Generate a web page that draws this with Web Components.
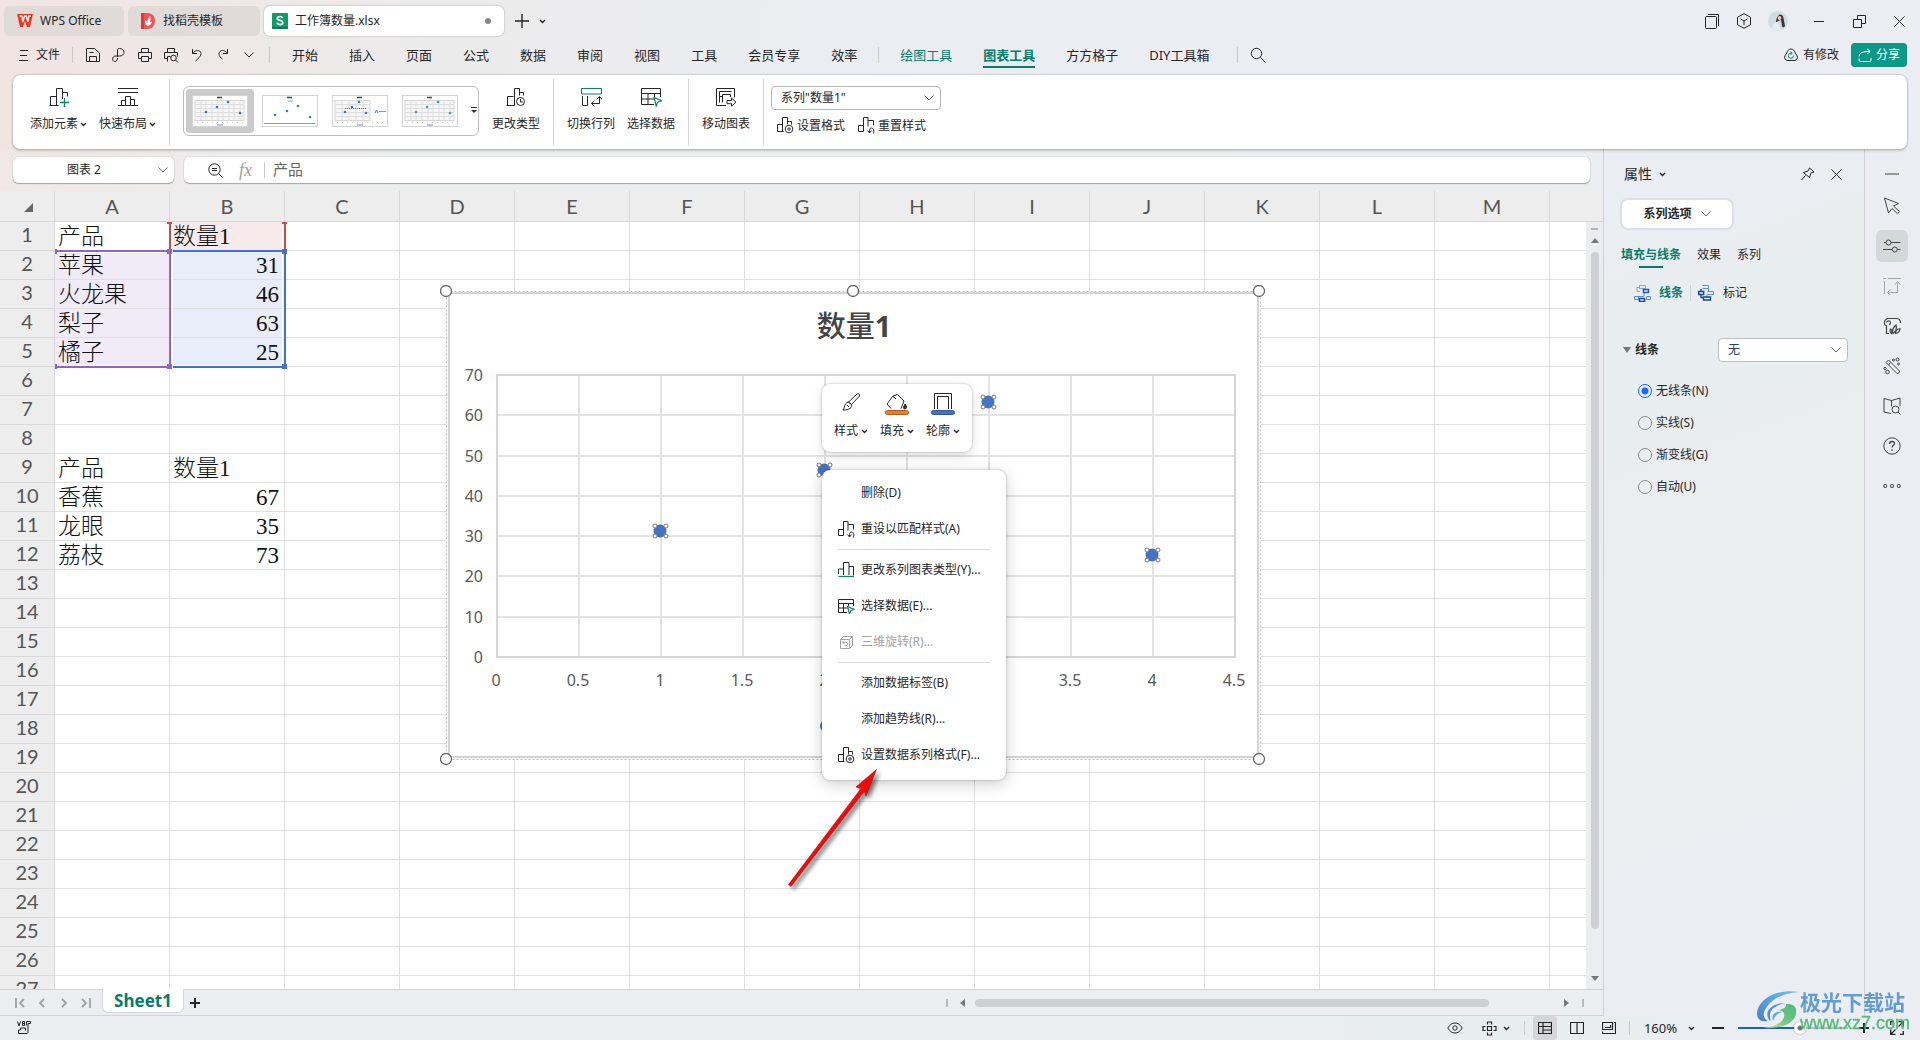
<!DOCTYPE html>
<html lang="zh-CN">
<head>
<meta charset="utf-8">
<title>工作簿数量.xlsx</title>
<style>
html,body{margin:0;height:100%}
body{font:12px/16px "Noto Sans","Noto Sans CJK SC",sans-serif;color:#262626;overflow:hidden}
</style>
</head>
<body>
<wps-app></wps-app>
<script>
const define = (name, css, html, init) => customElements.define(name, class extends HTMLElement {
  constructor(){
    super();
    const root = this.attachShadow({mode:'open'});
    const t = document.createElement('template');
    t.innerHTML = `<style>*{box-sizing:border-box}button,select,input{font:inherit;color:inherit;background:none;border:0;margin:0;padding:0;outline:0}button{display:flex;align-items:center;justify-content:center;white-space:nowrap}${css}</style>${html}`;
    root.append(t.content.cloneNode(true));
    if(init) this._init = init;
  }
  connectedCallback(){ if(this._init) this._init(this.shadowRoot, this); }
});

const G = '#0a8566';
const ICONS = {
  wps:[16,16,'<path d="M0 1h16l-3 13h-3l-2-6-2 6H3z" fill="#f5331f"/><path d="M2.6 3h2.2l1 6 1.7-6h1.8l1.6 6 1-6h1.8" fill="none" stroke="#fff" stroke-width="1.3"/>'],
  docer:[16,16,'<path d="M0 0h6c6 0 8 4 8 8s-2 8-8 8H0z" fill="#f05458"/><path d="M0 0h3v16H0z" fill="#d93a40"/><path d="M6.500 13C3.500 11 4 8 4.500 7c1 1 2 2 2 3 0-3 .5-5 2.500-7 1 3 .5 5-.5 7 1-1 2-1.300 2.500-1.500 0 2-1.500 4-4.500 4.500z" fill="#fff"/>'],
  sheet:[16,16,'<rect width="16" height="16" rx="1" fill="#109a66"/><path d="M0 14h16v1a1 1 0 0 1-1 1H1a1 1 0 0 1-1-1z" fill="#0a7d4f"/><path d="M10.700 5.200C10.200 4 9.300 3.500 8 3.500c-1.600 0-2.700.8-2.700 2 0 2.600 5.500 1.200 5.500 4 0 1.300-1.100 2.100-2.800 2.100-1.500 0-2.500-.6-3-1.900" fill="none" stroke="#fff" stroke-width="1.700"/>'],
  plus:[14,14,'<path d="M7 0v14M0 7h14" stroke-width="1.400"/>'],
  plusb:[10,10,'<path d="M5 0v10M0 5h10" stroke-width="2"/>'],
  minusb:[12,10,'<path d="M0 5h12" stroke-width="2"/>'],
  caret:[7,5,'<path d="M1 1l2.500 2.500L6 1" stroke-width="1.400"/>'],
  chev:[10,6,'<path d="M.5.5L5 5 9.500.5"/>'],
  menu:[10,12,'<path d="M1 1.500h8M1 6.500h7M0 11.500h9"/>'],
  save:[16,16,'<path d="M1.500 1.500h8l5 4.500v8.500h-13zM4.500 14.500v-5h7v5M4.500 5.500h4"/>'],
  pdf:[16,16,'<path d="M6.500 10V3C6.500 2 7 1.500 8.500 1.500c6 0 6 7.500 0 7.500H4C1 9.500 1 14.500 3.500 14.500c2.500 0 3-1.500 3-3.500"/>'],
  print:[16,16,'<path d="M4.500 5V1.500h7V5M4.500 11.500h-3v-6h13v6h-3M4.500 9.500h7v5h-7z"/>'],
  preview:[16,16,'<path d="M4.500 5V1.500h7V5M4 11.500H1.500v-6h13v4M4.500 14.500v-5h3"/><circle cx="10.500" cy="11" r="2.800"/><path d="M12.500 13l2.500 2.500"/>'],
  undo:[14,14,'<path d="M2.500 1v4.500h4.500M2.500 5.500C5 1.500 10.500 1.500 11 5.500c0 3-3 5-5.500 7.500"/>'],
  redo:[14,14,'<path d="M11.500 1v4.500H7M11.500 5.500C9 1.500 3.500 1.500 3 5.500c0 3 2 4.500 3.500 5.500"/>'],
  search:[16,16,'<circle cx="6.500" cy="6.500" r="5.200"/><path d="M10.500 10.500l5 5"/>'],
  pages:[15,15,'<rect x=".5" y="2.500" width="11" height="12" rx="1"/><path d="M3 .5h10.500V12"/>'],
  cube:[16,16,'<path d="M8 .7l6.500 3.600v7.400L8 15.300 1.500 11.700V4.300zM4.500 5.800L8 8l3.500-2.200M8 8v4"/>'],
  avatar:[20,20,'<circle cx="10" cy="10" r="10" fill="#cfdde3"/><path d="M10 5c2-2.500 5-1.500 5.500 2l1.500 8c-1 2-2.500 1.500-3 0l-1-6-3 1-2 2c0-3 .5-5 2-7z" fill="#3c3436"/><circle cx="11.500" cy="7" r="1.900" fill="#edc8b8"/><path d="M4 18c0-5 3-7 6-7l3 8c-3 1.200-6 1-9-1z" fill="#e3ecf0"/>'],
  min:[10,10,'<path d="M0 5.500h10"/>'],
  restore:[13,13,'<path d="M.5 4.500h8v8h-8zM4.500 4V.5h8v8H9"/>'],
  close:[11,11,'<path d="M.5.5l10 10M10.500.5l-10 10"/>'],
  cloud:[16,14,'<path d="M4 12.500a3.500 3.500 0 0 1-.5-6.500C4 2.500 6 1 8 1s4 1.500 4.500 5A3.500 3.500 0 0 1 12 12.500z"/><path d="M10.500 7.500a2.600 2.600 0 1 1-2-2.300M7.500 3.500l1.800 1.700-1.800 1.600" stroke="#0a8566"/>'],
  share:[14,14,'<path d="M1 8.500C1.500 4.500 5 3.500 11.500 3.500M9 .8l3.200 2.700L9 6.200M1 10.500v1.500q0 1.500 1.500 1.500h9q1.500 0 1.500-1.500v-2"/>'],
  addel:[20,20,`<path d="M13.500 12V1.500h-6v17M1.500 18.500v-9h6M.5 18.500h9M13.500 5.500h5v4"/><path d="M15.500 11v9M11 15.500h9" stroke="${G}" stroke-width="1.300"/>`],
  layout:[20,20,'<path d="M0 1.500h20M0 5.500h20M0 18.500h20M3.500 18.500v-5h4v5M7.500 14V9.500h5v9M12.500 12.500h4v6"/>'],
  ctype:[20,20,'<path d="M.5 18.500h8V1.500h5v7M1.500 18.500v-9h6M13.500 5.500h4v3"/><circle cx="14.500" cy="14.500" r="4"/><path d="M14.500 12v3h2.500"/>'],
  swap:[21,20,`<path d="M.5 1.500h20v5.500H.5z" stroke="${G}"/><path d="M1.500 9v9.500h5V9M18.500 10v6.500h-8M13.500 13.500l-3 3 3 3M15.500 12.500l3-3 2.500 3"/>`],
  seldata:[21,20,`<path d="M13 17.500H.5v-16h19V10M.5 6.500h19M.5 12h13M7 6.500v11M13.500 6.500V10"/><path d="M13 10.500l7.500 3.200-3.500 1.300-1.800 4z" stroke="${G}" stroke-width="1.200"/>`],
  move:[21,20,'<path d="M10 18.500H.5v-17h18v9M3.500 4.500h12M3.500 4.500v11M6.500 15.500v-8h8v2.500M3.500 9.500h3M11 13.500h4.500v-2.500l4.500 4.200-4.500 4v-2.500H11z"/>'],
  setfmt:[17,17,'<path d="M6.500 14.500h-6v-7h5v7M5.500 8V.5h5v7M10.500 4.500h4v3"/><circle cx="12" cy="12" r="3.800"/><circle cx="12" cy="12" r="1.200"/>'],
  reset:[17,17,'<path d="M5.500 14.500h-5v-6h5v6M5.500 9V.5h4.500v9M10 3.500h5.500v5M15.500 16.500c.8-3.500 0-5.500-2-5.500s-2 1.500-2 4.500M9.500 13.500l2 2.500 2-2.500"/>'],
  bars:[17,16,`<path d="M.5 12v-5h5v6M5.500 7V.500h5.500v12.500M11 4.500h4.500v9"/><path d="M.5 14.500h15.500" stroke="${G}" stroke-width="1.300"/>`],
  seldatas:[17,16,`<path d="M9 14.500H.5v-13h15V8M.5 5.500h15M.5 10h9M5.500 5.500v9M10.500 5.500V8"/><path d="M9.500 8.500l6.500 2.800-3 1.200-1.500 3.500z" stroke="${G}" stroke-width="1.200"/>`],
  cube3:[16,16,'<path d="M2.500 5.500h9v9h-9zM2.500 5.500l3-3h9l-3 3M14.500 2.500v9l-3 3M5 9c1.500-1.500 4-1 4.500.5.500 1.500-1.500 2.500-3 2M5 7v2h2"/>'],
  brush:[20,18,'<path d="M7.500 9L16 1c2-1 3 .5 2.500 2L10.500 11.500z"/><path d="M7.500 9l3 2.500c1 3-2 5.500-8.500 5.500 2-2 1-6 4-7.500zM6 12l2 2"/>'],
  bucket:[24,22,'<path d="M6 15.500L2 11l6-8 4.500-1.500L19 8l-3 7.500M8 3.500l3 2.500"/><path d="M20 11c1.500 2 2 3 1 4.500-1 .8-2 .5-2.500-.5 0-1.500 1-2.500 1.500-4z" fill="#333"/><rect x=".5" y="17.500" width="23" height="4" rx="2" fill="#ed7d31" stroke="#b95a17"/>'],
  outline:[24,22,'<path d="M3.500 16V.5h17V16M6.500 16V3.500h11V16"/><rect x=".5" y="17.500" width="23" height="4" rx="2" fill="#4472c4" stroke="#2f55a0"/>'],
  zoomout:[15,15,'<circle cx="6.500" cy="6.500" r="5.700"/><path d="M4 5.500h5M4 7.500h5M11 11l3.500 3.500"/>'],
  pin:[14,14,'<path d="M8.500 1l4.500 4-3 1-1.500 4.500L2.500 5.500 7 4zM4.500 8.500L.5 13"/>'],
  linei:[17,17,'<path d="M5.500.5h6v3h-6zM3 6.500v-4h2.500M3 6.500h3" stroke="#7fa6f0"/><path d="M9.500 4.500h5v3h-5z" stroke="#2554a8" stroke-width="1.500"/><path d="M10 8v3M4 11.500h6M.5 11.500h4v3h-4zM12.500 11.500h4v3h-4z" stroke="#5b8ae8"/><path d="M5.500 13.500h5v3h-5z" stroke="#174a8c" stroke-width="1.500"/>'],
  marki:[17,16,'<path d="M4.500.5h6v3h-6M10.500 2v4M9.500 6.500h6v3h-6M9 9v3" stroke="#5b8ae8"/><path d="M.7 6.500h5v3h-5zM3 9.500v3h3M3 6V4M5.500 12h7v3h-7z" stroke="#174a8c" stroke-width="1.400"/>'],
  cursor:[18,18,'<path d="M1.500 1l14 5.500-5 2.500 6 5.500-2 2.200L9 11.500 5.500 16z"/>'],
  sliders:[18,16,'<path d="M1 4.500h2M8 4.500h9.500M0 11.500h9M14.500 11.500h3"/><circle cx="5.500" cy="4.500" r="2.500"/><circle cx="11.800" cy="11.500" r="2.500"/>'],
  crop:[18,18,'<path d="M0 1.500h3M5 1.500h13M1.500 4v13M4.500 15.500h10v-10M7.500 12.500l-3 3 3 2.500M11.500 8l3-3.500 3 3.500"/>'],
  eleph:[18,18,'<path d="M6 16.500H3.500V9C.5 8 .5 3 4.500 1.500h9c2.500 0 4 2 4 4.500M3.500 5.500c.5-1.500 2-2 3-1.500 1.500.5 1 3-.5 4M7.500 12c1.500.5 1.500 2.500 1 4.500-1.500-1-1.800-2.800-1-4.500zM10 16.500c-1-3 .5-6.500 3-8.500.8 3 0 6.500-3 8.500zM12.500 16.500c0-3 2-4.500 4.500-5-.2 3-1.500 4.500-4.500 5z" stroke-width="1.200"/>'],
  wand:[18,18,'<path d="M3 5.500l2.500-2.500 11 11c0 2-1 2.500-2.500 2.500zM5.500 8l2-2.500"/><circle cx="10.500" cy="3" r="1"/><circle cx="14.500" cy="2.500" r="1.500"/><circle cx="15.500" cy="7" r="1"/><circle cx="2" cy="11.500" r="1.200"/><circle cx="4.500" cy="15" r="1.800"/>'],
  book:[18,18,'<path d="M8.500 3.500v6M8.500 3.500L1 1.500V15l7 1.500M8.500 3.500L17 1v8"/><circle cx="12.500" cy="12.500" r="3.500"/><path d="M15 15l2.500 2.500"/>'],
  help:[18,18,'<circle cx="9" cy="9" r="8.200"/><path d="M6.500 7c0-3.500 5-3 5-.5 0 1.500-2.500 2-2.500 4M9 12.200v1.500" stroke-width="1.300"/>'],
  dots:[18,6,'<circle cx="2.200" cy="3" r="1.600"/><circle cx="9" cy="3" r="1.600"/><circle cx="15.800" cy="3" r="1.600"/>'],
  first:[10,12,'<path d="M1 1v10M9 2L5 6l4 4" stroke-width="1.800"/>'],
  prev:[10,12,'<path d="M7 2L3 6l4 4" stroke-width="1.800"/>'],
  next:[10,12,'<path d="M3 2l4 4-4 4" stroke-width="1.800"/>'],
  last:[10,12,'<path d="M9 1v10M1 2l4 4-4 4" stroke-width="1.800"/>'],
  vb:[16,14,'<path d="M.5.500L2 5 3.500.500M5.500.500v4h2v-4zM5.500 2.500h2M9.500 4.500V.500h4v2h-2.500V12M1.500 12.500v-3.500h2V7h5v2.500M1.500 12.500h9"/>'],
  eye:[16,12,'<path d="M.8 6C3 2.500 5 1 8 1s5 1.500 7.200 5C13 9.500 11 11 8 11S3 9.500.8 6z"/><circle cx="8" cy="6" r="2.200"/>'],
  cross:[15,15,'<path d="M5.500 3.500V1h4v2.500M5.500 11.500V14h4v-2.500M3.500 5.500H1v4h2.500M11.500 5.500H14v4h-2.500M5.500 5.500h4v4h-4z" stroke-width="1.200"/>'],
  vnorm:[14,12,'<path d="M.5.500h13v11H.5zM.5 4.500h13M5 .5v11M5 8h8.500" stroke-width="1.200"/>'],
  vpage:[14,12,'<path d="M.5.500h13v11H.5zM7 .5v11" stroke-width="1.200"/>'],
  vbreak:[14,12,'<path d="M.5.500h10v7H.5zM3 5.500h5.500V3M.5 9.500v2h13V.5h-1.500" stroke-width="1.200"/>'],
  full:[14,14,'<path d="M8.500.7h4.800v4.800M5.500 13.300H.7V8.500M13 1L8.500 5.500M1 13l4.500-4.500M.7 4V.7H4M13.300 10v3.300H10" stroke-width="1.300"/>'],
};
const icon = n => { const [w,h,p] = ICONS[n]; return `<svg width="${w}" height="${h}" viewBox="0 0 ${w} ${h}" fill="none" stroke="currentColor" stroke-width="1" aria-hidden="true">${p}</svg>`; };
define('ui-icon', ':host{display:inline-flex;flex:none}svg{display:block}', '', (r,el)=>{ r.innerHTML += icon(el.getAttribute('name'));
  // filled logos carry no outline
  if(['wps','docer','sheet','avatar'].includes(el.getAttribute('name'))) r.querySelector('svg').setAttribute('stroke','none'); });
const I = n => `<ui-icon name="${n}"></ui-icon>`;

define('title-bar', `
:host{display:flex;align-items:stretch;height:36px;padding:6px 14px 0 4px;gap:4px}
.tab{border-radius:6px;background:#e0dad9;padding:0 13px 1px;justify-content:flex-start;gap:7px}
.t1{width:120px}.t2{width:132px;gap:6px}
.t3{width:240px;background:#fff;box-shadow:0 0 2px #0005;padding:0 13px 1px 8px}
.dot{width:6px;height:6px;border-radius:3px;background:#888;margin-left:auto}
.new{margin-left:7px;gap:10px;display:flex;align-items:center}
.win{margin-left:auto;display:flex;align-items:center}
.win button{height:28px}
`, `
<button class="tab t1">${I('wps')}WPS Office</button>
<button class="tab t2">${I('docer')}找稻壳模板</button>
<button class="tab t3">${I('sheet')}工作簿数量.xlsx<span class="dot"></span></button>
<div class="new"><button aria-label="新建">${I('plus')}</button><button aria-label="更多">${I('caret')}</button></div>
<div class="win"><button style="width:32px" aria-label="窗口">${I('pages')}</button><button style="width:32px" aria-label="应用">${I('cube')}</button><button style="width:36px" aria-label="账户">${I('avatar')}</button><button style="width:46px" aria-label="最小化">${I('min')}</button><button style="width:34px" aria-label="还原">${I('restore')}</button><button style="width:46px;margin-right:-16px" aria-label="关闭">${I('close')}</button></div>`);

define('menu-bar', `
:host{display:flex;align-items:center;height:39px;padding:0 13px 2px 19px}
.file{gap:7px}i{width:1px;height:16px;background:#c9c9c9}
.q{display:flex;margin:0 0 0 7px}.q button{width:26px;height:24px}
nav{display:flex;align-items:center;gap:31px;margin-left:22px;font-size:13px;line-height:24px}
nav button{height:25px;position:relative}
nav i{margin:0 -10px}
.g{color:#047d6c}.on{font-weight:700}.on::after{content:"";position:absolute;left:0;right:0;bottom:-1px;height:2px;background:#047d6c}
.r{margin-left:auto;display:flex;gap:12px;align-items:center}.r button{gap:4px;height:24px}
.share{background:#089a86;color:#fff;border-radius:4px;width:56px}
`, `
<button class="file">${I('menu')}文件</button><i style="margin-left:12px"></i>
<div class="q">${['save','pdf','print','preview','undo','redo','chev'].map(n=>`<button aria-label="${n}">${I(n)}</button>`).join('')}</div><i style="margin-left:7px"></i>
<nav>${['开始','插入','页面','公式','数据','审阅','视图','工具','会员专享','效率'].map(t=>`<button>${t}</button>`).join('')}<i></i>
<button class="g">绘图工具</button><button class="g on">图表工具</button><button>方方格子</button><button>DIY工具箱</button></nav>
<i style="margin:0 12px 0 28px"></i><button aria-label="搜索">${I('search')}</button>
<div class="r"><button>${I('cloud')}有修改</button><button class="share">${I('share')}分享</button></div>`);

const thumb = (v) => {
  const c = v==3?'#3f9bc8':'#4472c4';
  const grid = v==1?'<path d="M2 28.500h51" stroke="#999"/>':`<rect x="3" y="5.500" width="${v==2?35:49}" height="20" fill="#f6f6f6" stroke="#d6d6d6"/><path d="M3 9.500h${v==2?35:49}M3 13.500h${v==2?35:49}M3 17.500h${v==2?35:49}M3 21.500h${v==2?35:49}M${v==2?'10 5v20M17 5v20M24 5v20M31 5v20':'9 5v20M14 5v20M20 5v20M26 5v20M31 5v20M37 5v20M42 5v20M48 5v20'}" stroke="#dedede"/>`;
  const pts = [[[14,17],[25,12],[36,7],[48,18]],[[13,20],[25,16],[36,11],[48,22]],[[13,17],[20,12],[27,7],[34,18]],[[14,17],[25,12],[36,7],[48,18]]][v];
  return `<svg width="56" height="32" viewBox="0 0 56 32" fill="none"><rect x=".5" y=".5" width="55" height="31" fill="#fff" stroke="#d4d4d4"/>${grid}<path d="M25 2.500h5" stroke="#444" stroke-width="1.500"/>${v==1?'<path d="M26 6h5" stroke="#7d9bd6"/>':'<path d="M5 27.500h46" stroke="#c9bfb2" stroke-dasharray="1 4"/><path d="M25 30h6" stroke="#6f8fc9"/>'}${v==2?'<path d="M13 13.500h21" stroke="#4472c4" stroke-dasharray="1 1"/><path d="M43 18l1.500-3 1.500 3" stroke="#4472c4"/><path d="M47 16.500h7" stroke="#999"/>':''}${pts.map(p=>`<circle cx="${p[0]}" cy="${p[1]}" r="1.300" fill="${c}"/>`).join('')}</svg>`;
};
define('ribbon-bar', `
:host{display:flex;align-items:center;gap:13px;height:74px;margin:0 13px;padding:0 17px;background:#fff;border-radius:7px;box-shadow:0 0 2px #0006,0 2px 3px #0002;position:relative;z-index:2}
i{width:1px;height:66px;background:#d4d4d4}
.b{flex-direction:column;gap:9px;height:54px;min-width:48px;margin-bottom:5px}.b span{display:flex;align-items:center;gap:2px}
.b+.b{margin-left:-1px}
.gal{display:flex;align-items:center;height:50px;width:296px;border:1px solid #bdbdbd;border-radius:6px;padding:0 2px;margin-bottom:3px}
.gal button{width:70px;height:44px;border-radius:4px;flex:none}.gal .on{background:#cbcbcb;width:68px;margin-right:1px}
.gal .more{width:auto;flex:1;padding-left:6px}
svg{display:block}
.s{display:flex;flex-direction:column;gap:7px;margin:0 0 4px -6px}
label{position:relative;display:flex;align-items:center}label ui-icon{position:absolute;right:7px;color:#666}
select{appearance:none;width:170px;height:24px;border:1px solid #b5b5b5;border-radius:4px;padding:0 9px;font-size:12px}
.row{display:flex;gap:13px;padding-left:6px}.row button{gap:3px;height:18px}
`, `
<button class="b">${I('addel')}<span>添加元素${I('caret')}</span></button><button class="b">${I('layout')}<span>快速布局${I('caret')}</span></button><i></i>
<div class="gal">${[0,1,2,3].map(v=>`<button class="${v?'':'on'}" aria-label="布局样式">${thumb(v)}</button>`).join('')}<button class="more" aria-label="更多样式"><svg width="6" height="7"><path d="M0 .5h6" stroke="#333"/><path d="M0 3h6L3 6z" fill="#333"/></svg></button></div>
<button class="b">${I('ctype')}<span>更改类型</span></button><i></i>
<button class="b">${I('swap')}<span>切换行列</span></button><button class="b">${I('seldata')}<span>选择数据</span></button><i></i>
<button class="b">${I('move')}<span>移动图表</span></button><i></i>
<div class="s"><label><select aria-label="图表元素"><option>系列"数量1"</option></select>${I('chev')}</label>
<div class="row"><button>${I('setfmt')}设置格式</button><button>${I('reset')}重置样式</button></div></div>`);

define('formula-bar', `
:host{display:flex;gap:10px;height:42px;padding:8px 13px 8px 13px;flex:none}
div{display:flex;align-items:center;background:#fff;border-radius:5px;box-shadow:0 0 1px #0006,0 1px 1px #0004;height:26px}
.n{width:161px;padding:0 6px;color:#666}.n input{flex:1;min-width:0;text-align:center;color:#262626;padding-right:9px}
.f{flex:1;padding-left:24px}.fx{font:italic 18px/20px "Liberation Serif",serif;color:#a0a0a0;margin:0 12px 0 16px}
i{width:1px;height:16px;background:#c9c9c9;margin-right:8px}.f input{flex:1;font-size:15px;color:#666;height:26px;padding-bottom:4px}
`, `
<div class="n"><input aria-label="名称框" value="图表 2">${I('chev')}</div>
<div class="f">${I('zoomout')}<span class="fx">fx</span><i></i><input aria-label="编辑栏" value="产品"></div>`);

const DATA = {1:['产品','数量1'],2:['苹果',31],3:['火龙果',46],4:['梨子',63],5:['橘子',25],9:['产品','数量1'],10:['香蕉',67],11:['龙眼',35],12:['荔枝',73]};
const cols = 'ABCDEFGHIJKLM'.split('');
define('sheet-grid', `
:host{display:flex;flex:1;min-height:0;position:relative;background:#fff}
.v{flex:1;min-width:0;overflow:hidden;position:relative}
table{table-layout:fixed;border-collapse:separate;border-spacing:0;width:1665px}
th,td{border-right:1px solid #dfdfdf;border-bottom:1px solid #dfdfdf;padding:0;height:29px;overflow:hidden;white-space:nowrap}
th{background:#ededed;font:400 20px/28px Lato,sans-serif;color:#555;border-color:#d8d8d8}
thead th{height:31px;line-height:30px}tbody th{line-height:24px;vertical-align:top}
thead th:first-child svg{display:block;margin:3px 0 0 24px}
td{font:300 23px/27px "Liberation Serif","Noto Sans CJK SC",serif;color:#111;padding:2px 4px 0 3px;line-height:26px;vertical-align:bottom}
td.num{text-align:right;padding-right:5px}
.red{background:#f7eaea}.pur{background:#f1ebf7}.blu{background:#e8edf9}
.ov{position:absolute;left:0;top:31px;width:300px;height:160px}
.sb{width:17px;flex:none;display:flex;flex-direction:column;align-items:center;background:#ebedf1}
.sb .h{width:17px;height:31px;background:#ededed;border-bottom:1px solid #d8d8d8}
.sb .m{width:7px;height:2px;background:#b5b5b5;margin:6px 0 8px}
.up,.dn{border:4px solid transparent;border-top:0;border-bottom:5px solid #777;width:0;height:0}.dn{border-top:5px solid #777;border-bottom:0;margin-bottom:8px}
.th{width:8px;flex:1;border-radius:4px;background:#cfd0d5;margin:9px 0 47px}
slot{display:contents}
`, `
<div class="v"><table><colgroup><col style="width:55px">${cols.map(()=>'<col style="width:115px">').join('')}<col style="width:115px"></colgroup>
<thead><tr><th><svg width="10" height="10"><path d="M9 0v9H0z" fill="#666"/></svg></th>${cols.map(c=>`<th>${c}</th>`).join('')}<th></th></tr></thead>
<tbody>${Array.from({length:27},(_,k)=>k+1).map(r=>{const d=DATA[r]||[];return `<tr><th>${r}</th>${[...Array(14)].map((_,c)=>{const v=d[c]??'';const cl=[typeof v=='number'?'num':'',r==1&&c==1?'red':'',r>1&&r<6&&c==0?'pur':'',r>1&&r<6&&c==1?'blu':''].join(' ').trim();return `<td${cl?` class="${cl}"`:''}>${v}</td>`}).join('')}</tr>`}).join('')}</tbody></table>
<svg class="ov" viewBox="0 0 300 160" fill="none" stroke-width="2">
<g stroke="#fff" stroke-width="1"><path d="M172.500 3v23M282.500 3v23M56 30.500h112M172.500 31v112M282.500 31v112M56 143.500h112M173 143.500h109"/></g>
<path d="M170 0v27M285 0v27" stroke="#c0504d"/><path d="M167 1h5M282 1h5" stroke="#c0504d"/>
<path d="M173 29h109M285 32v110M173 145h109" stroke="#4470d0"/><path d="M56 29h111M170 32v110M56 145h111" stroke="#9364c0"/>
<path d="M167 27h5v5h-5zM167 142h5v5h-5z" fill="#9364c0" stroke="none"/><path d="M55 27h2v5h-2zM55 142h2v5h-2z" fill="#9364c0" stroke="none"/><path d="M282 27h5v5h-5zM282 142h5v5h-5z" fill="#4470d0" stroke="none"/></svg>
</div>
<div class="sb"><div class="h"></div><div class="m"></div><div class="up"></div><div class="th"></div><div class="dn"></div></div>
<slot></slot>`);

const X = i => 57+82*i, Y = v => Math.round(372-v*282/70);
const mark = (x,y) => `<circle cx="${x}" cy="${y}" r="6.500" fill="#4472c4"/>${[[-5,-5],[6,-5],[-5,5],[6,5]].map(([a,b])=>`<circle cx="${x+a}" cy="${y+b}" r="2" fill="#fff" stroke="#777"/>`).join('')}`;
define('sheet-chart', `:host{position:absolute;left:440px;top:94px;z-index:1}svg{display:block}
text{font:16px "Noto Sans",sans-serif;fill:#595959}.t{font:700 29px "Noto Sans","Noto Sans CJK SC",sans-serif;fill:#444}.t .c{font-weight:500}`, `
<svg width="828" height="482" viewBox="0 0 828 482" fill="none">
<path d="M6.500 6.500h814v468H6.500z" fill="#fff" stroke="#bbb" stroke-dasharray="2 2"/>
<path d="M9 8h809v464H9z" fill="#fff" stroke="#d4d4d4" stroke-width="2"/>
<g stroke="#e3e3e3" stroke-width="2"><path d="${[1,2,3,4,5,6,7,8].map(i=>`M${X(i)} 90V372`).join('')}${[10,20,30,40,50,60].map(v=>`M57 ${Y(v)}h738`).join('')}"/></g>
<path d="M57 90h738v282H57z" stroke="#d6d6d6" stroke-width="2"/>
<text class="t" x="414" y="52" text-anchor="middle"><tspan class="c">数量</tspan>1</text>
${[0,10,20,30,40,50,60,70].map(v=>`<text x="43" y="${Y(v)+6}" text-anchor="end">${v}</text>`).join('')}
${[0,.5,1,1.5,2,2.5,3,3.5,4,4.5].map((v,i)=>i>4&&i<7?'':`<text x="${X(i)-1}" y="401" text-anchor="middle">${v}</text>`).join('')}
${mark(220,246)}${mark(384,185)}${mark(548,117)}${mark(712,270)}
<circle cx="386" cy="441" r="6" fill="#4472c4"/>
${[[6,6],[413,6],[819,6],[6,474],[413,474],[819,474]].map(([x,y])=>`<circle cx="${x}" cy="${y}" r="5.500" fill="#fff" stroke="#666" stroke-width="1.300"/>`).join('')}
</svg>`);

define('mini-toolbar', `:host{position:absolute;left:822px;top:193px;z-index:2;display:flex;width:150px;height:68px;padding:8px 6px 13px;background:#fff;border-radius:8px;box-shadow:0 0 2px #0005,0 4px 12px #0002}
button{flex:1;flex-direction:column;justify-content:space-between}.i{height:23px;display:flex;align-items:flex-start;padding-top:1px}span{display:flex;align-items:center;gap:3px}`,
[['brush','样式'],['bucket','填充'],['outline','轮廓']].map(([i,t])=>`<button><div class="i">${I(i)}</div><span>${t}${I('caret')}</span></button>`).join(''));

define('context-menu', `:host{position:absolute;left:822px;top:279px;z-index:3;display:block;width:184px;padding:5px 16px 7px;background:#fff;border-radius:8px;box-shadow:0 0 2px #0005,0 4px 16px #0003}
button{height:36px;width:100%;justify-content:flex-start;gap:6px}button>span{width:17px;display:flex}button:disabled{color:#a3a3a3}hr{border:0;height:1px;background:#dcdcdc;margin:2px 0}`,
[['','删除(D)'],['reset','重设以匹配样式(A)'],0,['bars','更改系列图表类型(Y)...'],['seldatas','选择数据(E)...'],['cube3','三维旋转(R)...',1],0,['','添加数据标签(B)'],['','添加趋势线(R)...'],['setfmt','设置数据系列格式(F)...']].map(m=>m?`<button${m[2]?' disabled':''}><span>${m[0]?I(m[0]):''}</span>${m[1]}</button>`:'<hr>').join(''));

define('pointer-arrow', `:host{position:absolute;left:780px;top:571px;z-index:4}svg{display:block;filter:drop-shadow(3px 3px 2px #0008)}`,
`<svg width="110" height="130" viewBox="0 0 110 130"><path d="M96.500 7.500L76 25l5 1.500L8.500 122.500l2.500 2L84.500 29l1.500 5z" fill="#fb0505" stroke="#8a2020" stroke-width=".6"/></svg>`);

define('sheet-tabs', `
:host{display:flex;height:27px;flex:none;border-top:1px solid #d2d2d2;border-bottom:1px solid #d2d3d6;background:#ecedf1;align-items:center;padding:0 19px 0 15px}
.n{display:flex;color:#a0a0a0;gap:12px}.n button{height:24px}
.s{width:82px;height:24px;align-self:flex-start;margin:-1px 6px 0 11px;background:#fff;border:1px solid #d6d6d6;border-top:0;border-radius:0 0 6px 6px;color:#047d6c;font:700 17px/22px "Noto Sans",sans-serif}
.h{margin-left:auto;display:flex;align-items:center;width:638px}
.h i{width:2px;height:8px;background:#bbb}.l,.r{border:4px solid transparent;border-right:5px solid #777;border-left:0;margin:0 10px 0 12px}.r{border-left:5px solid #777;border-right:0;margin:0 13px 0 75px}
.t{flex:1;height:8px;border-radius:4px;background:#cfd0d4}
`, `<div class="n">${['first','prev','next','last'].map(n=>`<button aria-label="${n}">${I(n)}</button>`).join('')}</div>
<button class="s">Sheet1</button><button aria-label="新建工作表">${I('plusb')}</button>
<div class="h"><i></i><span class="l"></span><span class="t"></span><span class="r"></span><i></i></div>`);

define('props-panel', `
:host{display:block;width:262px;flex:none;border-left:1px solid #cfd1d5;border-right:1px solid #cfd1d5;padding:15px 16px 0 18px;background:linear-gradient(160deg,#ebedf2,#e8edf0 25%,#ecedf1 55%,#ebedf3)}
header{display:flex;align-items:center;height:20px;font-size:14px;padding:0 6px 0 2px;gap:7px}
header .sp{flex:1}header button+button{margin-left:9px}
.opt{width:110px;height:28px;border-radius:6px;background:#fff;box-shadow:0 0 0 2px #dcdfe4;font-weight:700;gap:9px;margin:16px 0 0 0}.opt ui-icon{color:#666}
.tabs{display:flex;gap:16px;margin-top:16px}.tabs button{height:24px;position:relative;padding-bottom:2px}.tabs .on{margin-left:-1px}
.on{color:#047d6c;font-weight:700}.tabs .on::after{content:"";position:absolute;left:18px;width:24px;height:2px;bottom:0;background:#047d6c}
.sub{display:flex;gap:7px;align-items:center;margin:14px 0 0 12px}.sub button{gap:8px;height:22px}.sub i{width:1px;height:16px;background:#d0d2d6}
.ln{display:flex;align-items:center;margin-top:34px;font-weight:700;padding-left:1px;gap:4px}
.ln b{border:4px solid transparent;border-top:6px solid #777;border-bottom:0}
.ln div{margin-left:auto;position:relative;display:flex;align-items:center;font-weight:400}.ln div ui-icon{position:absolute;right:7px;color:#666}
select{appearance:none;width:130px;height:24px;background:#fff;border:1px solid #bdbfc4;border-radius:4px;padding:0 9px;color:#2f4058}
fieldset{border:0;margin:21px 0 0;padding:0 0 0 16px;display:flex;flex-direction:column;gap:16px}
label{display:flex;align-items:center;gap:4px;height:16px}
input{appearance:none;width:14px;height:14px;border-radius:7px;border:1px solid #8a8a8a}
input:checked{border-color:#1769ff;background:radial-gradient(circle,#1769ff 3px,transparent 4px)}
`, `
<header>属性${I('caret')}<span class="sp"></span><button aria-label="固定">${I('pin')}</button><button aria-label="关闭">${I('close')}</button></header>
<button class="opt">系列选项${I('chev')}</button>
<div class="tabs"><button class="on">填充与线条</button><button>效果</button><button>系列</button></div>
<div class="sub"><button class="on">${I('linei')}线条</button><i></i><button>${I('marki')}标记</button></div>
<div class="ln"><b></b><span>线条</span><div><select aria-label="线条"><option>无</option></select>${I('chev')}</div></div>
<fieldset aria-label="线条类型">${['无线条(N)','实线(S)','渐变线(G)','自动(U)'].map((t,i)=>`<label><input type="radio" name="line"${i?'':' checked'}>${t}</label>`).join('')}</fieldset>`);

define('side-rail', `:host{display:flex;flex-direction:column;align-items:center;gap:8px;width:55px;flex:none;padding:13px 1px 0 0}
button{width:32px;height:32px;border-radius:6px;color:#444}.m{height:24px;margin-bottom:-4px;color:#888}.on{background:#d5d8da}.dim{color:#a5a5a5}`,
`<button class="m" aria-label="折叠"><svg width="14" height="2"><rect width="14" height="2" fill="#999"/></svg></button>`+[['cursor'],['sliders','on'],['crop','dim'],['eleph'],['wand'],['book'],['help'],['dots']].map(([n,c])=>`<button class="${c||''}" aria-label="${n}">${I(n)}</button>`).join(''));

define('status-bar', `:host{display:flex;align-items:center;height:24px;flex:none;padding:0 16px 0 17px;background:linear-gradient(90deg,#ecedf1 60%,#e8edf0 75%,#ebedf2)}
div{display:flex;align-items:center;margin-left:auto}button{height:24px}i{width:1px;height:14px;background:#c9c9c9}
.v{width:24px;margin-right:8px;border-radius:3px}.on{background:#d5d6d9}
input{appearance:none;width:110px;height:16px;margin:0 11px 0 14px;background:linear-gradient(90deg,#1a5fd0 56%,#bbb 56%) center/100% 2px no-repeat}
input::-webkit-slider-thumb{appearance:none;width:12px;height:12px;border-radius:6px;background:radial-gradient(circle,#777 2px,#fff 3px);box-shadow:0 0 2px #0006}
`, `<button aria-label="宏">${I('vb')}</button>
<div><button style="margin-right:19px" aria-label="护眼">${I('eye')}</button><button style="gap:6px;margin-right:14px" aria-label="聚焦">${I('cross')}${I('caret')}</button><i style="margin-right:8px"></i>
<button class="v on" aria-label="普通视图">${I('vnorm')}</button><button class="v" aria-label="页面布局">${I('vpage')}</button><button class="v" aria-label="分页预览">${I('vbreak')}</button>
<i style="margin-right:14px"></i><button style="font-size:13px;gap:11px;margin-right:17px">160%${I('caret')}</button>
<button aria-label="缩小">${I('minusb')}</button><input type="range" min="0" max="100" value="57" aria-label="缩放"><button style="margin-right:21px" aria-label="放大">${I('plusb')}</button><button aria-label="全屏">${I('full')}</button></div>`);

define('site-mark', `:host{position:absolute;right:10px;bottom:7px;z-index:9;display:flex;align-items:center;opacity:.85;pointer-events:none}
p{margin:0;font:700 21px/24px "Noto Sans CJK SC",sans-serif;color:#4b8fd0}p+p{font:18px/20px "Liberation Sans",sans-serif;color:#3fb36a;-webkit-text-stroke:.4px #3fb36a}svg{display:block}`,
`<svg width="44" height="44" viewBox="0 0 44 44" fill="none"><defs><linearGradient id="a" x1="0" y1="1" x2="1" y2="0"><stop stop-color="#2e6cc0"/><stop offset="1" stop-color="#4fc0ee"/></linearGradient><linearGradient id="b" x1="0" y1="1" x2="1" y2="0"><stop stop-color="#f2e24a"/><stop offset=".5" stop-color="#5cc070"/><stop offset="1" stop-color="#2fae6a"/></linearGradient></defs>
<path d="M43 3C22-1 2 10 1 24c0 8 6 9 11 8-6-3-6-10 2-18C21 7 31 4 43 3z" fill="url(#a)"/><path d="M30 15c10-1 12 6 9 13-4 8-16 12-33 11 12-1 21-5 22-11 1-4-1-6-5-7 5-1 8-3 7-6z" fill="url(#b)"/><path d="M14 32c-7-8 0-18 15-18-8 2-15 6-15 12 0 2 1 5 0 6z" fill="#3d7fc8"/><path d="M17 32c-2-6 2-10 9-9-4 1-7 3-9 9z" fill="#4a9bd4"/></svg>
<div><p>极光下载站</p><p>www.xz7.com</p></div>`);

define('wps-app', `:host{display:flex;flex-direction:column;height:100vh;position:relative;background:linear-gradient(100deg,#f1e4e3 0,#ecebeb 20%,#ebedf3 45%,#ebedf3)}
main{flex:1;display:flex;min-height:0}section{flex:1;min-width:0;display:flex;flex-direction:column;background:linear-gradient(90deg,#f0e7e6,#ededed 15%,#ebedf1)}`, `
<title-bar></title-bar><menu-bar></menu-bar><ribbon-bar></ribbon-bar>
<main><section><formula-bar></formula-bar><sheet-grid><sheet-chart></sheet-chart><mini-toolbar></mini-toolbar><context-menu></context-menu><pointer-arrow></pointer-arrow></sheet-grid><sheet-tabs></sheet-tabs></section>
<props-panel></props-panel><side-rail></side-rail></main>
<status-bar></status-bar><site-mark></site-mark>`);
</script>
</body>
</html>
